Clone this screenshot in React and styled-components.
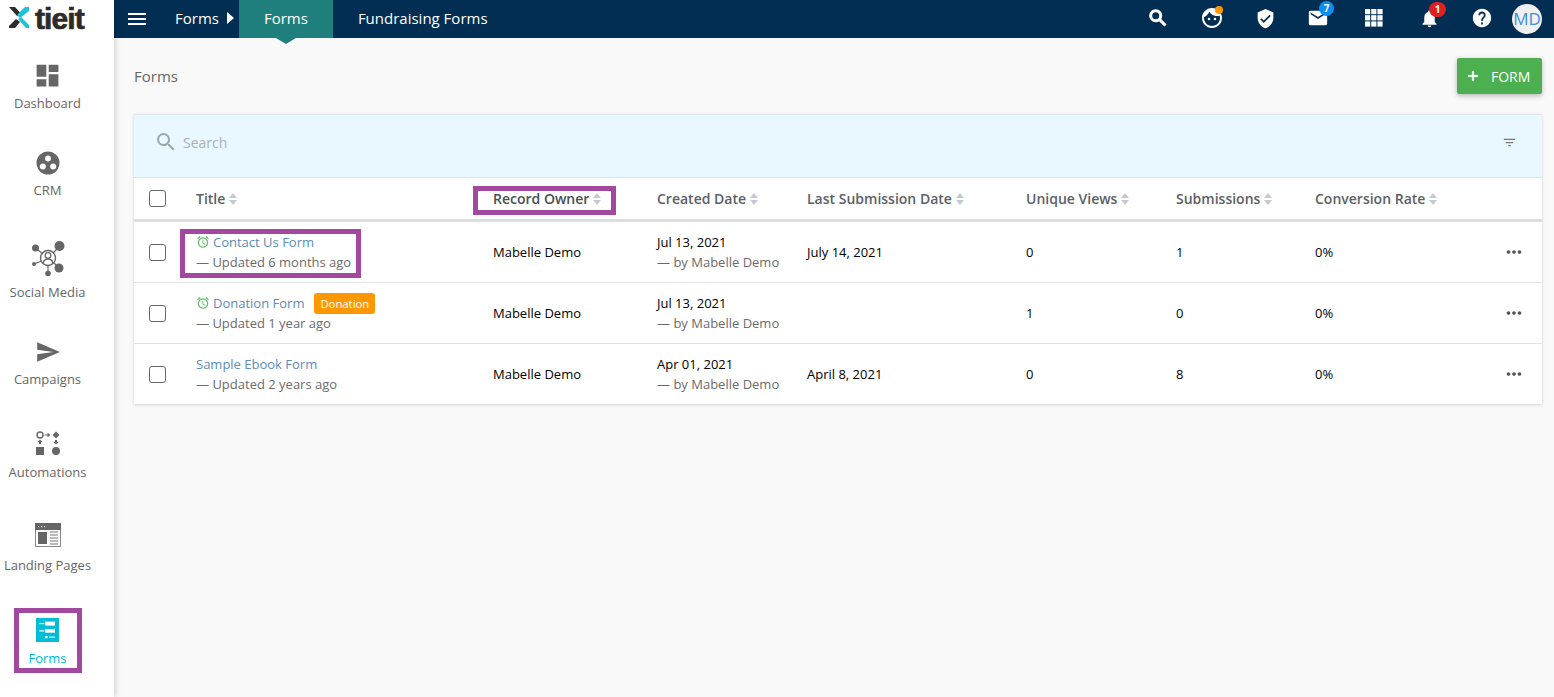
import React from "react";
import styled, { createGlobalStyle } from "styled-components";
import {
  MdDashboard,
  MdSend,
  MdMenu,
  MdSearch,
  MdFace,
  MdVerifiedUser,
  MdMail,
  MdNotifications,
  MdHelp,
  MdFilterList,
  MdMoreHoriz,
  MdAccessAlarm,
  MdAdd,
} from "react-icons/md";

const PURPLE = "#a2489e";
const GRID = "62px 297px 164px 150px 219px 150px 139px 1fr 36px";

const GlobalStyle = createGlobalStyle`
  html, body { margin: 0; height: 100%; }
  body {
    font-family: "Open Sans", "Liberation Sans", sans-serif;
    font-size: 13px;
    background: #f9f9f9;
    color: #000;
    overflow: hidden;
  }
`;

const Shell = styled.div`
  display: flex;
  height: 697px;
`;

const Sidebar = styled.aside`
  width: 114px;
  flex: none;
  background: #fff;
  box-shadow: 2px 0 5px rgba(0, 0, 0, 0.14);
  position: relative;
  z-index: 2;
`;

const LogoBox = styled.div`
  height: 38px;
  display: flex;
  align-items: flex-start;
  padding: 7px 0 0 9px;
  box-sizing: border-box;
`;

const LogoWord = styled.span`
  font-family: "Liberation Sans", sans-serif;
  font-weight: 700;
  font-size: 30px;
  line-height: 23px;
  letter-spacing: -0.9px;
  color: #2d2a2b;
  -webkit-text-stroke: 0.7px #2d2a2b;
  margin-left: 6px;
`;

const NavList = styled.nav`
  width: 95px;
  display: flex;
  flex-direction: column;
  align-items: center;
`;

const NavItem = styled.div`
  position: relative;
  height: ${(p) => p.$h}px;
  width: 100%;
  display: flex;
  flex-direction: column;
  align-items: center;
  color: ${(p) => (p.$active ? "#00bcd4" : "#666")};
  font-size: 13px;
`;

const NavIcon = styled.div`
  height: ${(p) => p.$h}px;
  display: flex;
  align-items: flex-end;
  justify-content: center;
  color: ${(p) => (p.$active ? "#00bcd4" : "#666")};

  svg {
    display: block;
  }
`;

const NavLabel = styled.div`
  line-height: 18px;
  margin-top: ${(p) => p.$gap}px;
  white-space: nowrap;
`;

const Frame = styled.div`
  position: absolute;
  border: 5px solid ${PURPLE};
  box-sizing: border-box;
  pointer-events: none;
`;

const SideFrame = styled(Frame)`
  left: 14px;
  top: 2px;
  width: 68px;
  height: 65px;
`;

const Main = styled.div`
  flex: 1;
  min-width: 0;
  display: flex;
  flex-direction: column;
`;

const TopBar = styled.header`
  height: 38px;
  flex: none;
  background: #012e52;
  display: flex;
  align-items: center;
  color: #fff;
  font-size: 15px;
  position: relative;
`;

const MenuButton = styled.div`
  width: 46px;
  display: flex;
  justify-content: center;
  font-size: 24px;
`;

const Crumb = styled.div`
  margin-left: 15px;
  display: flex;
  align-items: center;
  height: 100%;
  box-sizing: border-box;
  padding-bottom: 2px;
`;

const CrumbArrow = styled.span`
  width: 0;
  height: 0;
  margin-left: 8px;
  border-left: 7px solid #fff;
  border-top: 6px solid transparent;
  border-bottom: 6px solid transparent;
`;

const Tab = styled.div`
  height: 100%;
  box-sizing: border-box;
  display: flex;
  align-items: center;
  padding: 0 25px 2px;
  position: relative;
  background: ${(p) => (p.$active ? "#1f7f7c" : "transparent")};
  margin-left: ${(p) => (p.$active ? "5px" : "0")};

  ${(p) =>
    p.$active &&
    `&::after {
      content: "";
      position: absolute;
      left: 50%;
      bottom: -6px;
      margin-left: -10px;
      border-left: 10px solid transparent;
      border-right: 10px solid transparent;
      border-top: 6px solid #1f7f7c;
    }`}
`;

const TopIcons = styled.div`
  margin-left: auto;
  display: flex;
  align-items: center;
  height: 100%;
`;

const TopIcon = styled.div`
  position: relative;
  width: ${(p) => p.$w}px;
  height: 100%;
  box-sizing: border-box;
  padding-bottom: 2px;
  display: flex;
  align-items: center;
  justify-content: center;
  font-size: ${(p) => p.$size || 24}px;
`;

const BoldSearch = styled(MdSearch)`
  path:not([fill="none"]) {
    stroke: currentColor;
    stroke-width: 1.3;
  }
`;

const Badge = styled.span`
  position: absolute;
  left: ${(p) => p.$x}px;
  top: ${(p) => p.$y}px;
  width: ${(p) => p.$w}px;
  height: 15px;
  border-radius: 8px;
  background: ${(p) => p.$bg};
  color: #fff;
  font-size: 10px;
  font-weight: 700;
  line-height: 15px;
  text-align: center;
`;

const Dot = styled.span`
  position: absolute;
  left: 30px;
  top: 6px;
  width: 8px;
  height: 8px;
  border-radius: 50%;
  background: #ff9800;
`;

const Avatar = styled.div`
  width: 30px;
  height: 30px;
  border-radius: 50%;
  background: #f0f0f0;
  color: #3f8fdc;
  font-size: 17px;
  line-height: 30px;
  text-align: center;
  margin: 0 12px 0 4px;
`;

const Content = styled.main`
  flex: 1;
  padding: 20px 12px 0 20px;
`;

const PageHead = styled.div`
  height: 36px;
  display: flex;
  align-items: center;
  justify-content: space-between;
`;

const PageTitle = styled.h1`
  margin: 0;
  font-size: 15px;
  font-weight: 400;
  color: #666;
`;

const AddButton = styled.button`
  width: 85px;
  height: 36px;
  border: 0;
  border-radius: 2px;
  background: #4caf50;
  color: #fff;
  font: 400 14px "Open Sans", sans-serif;
  display: flex;
  align-items: center;
  gap: 10px;
  padding: 0 0 0 8px;
  box-shadow: 0 2px 5px rgba(0, 0, 0, 0.26);

  svg {
    font-size: 16px;
  }

  svg path:not([fill="none"]) {
    stroke: currentColor;
    stroke-width: 1;
  }
`;

const Panel = styled.section`
  margin-top: 20px;
  background: #fff;
  box-shadow: 0 1px 3px rgba(0, 0, 0, 0.16);
`;

const SearchBand = styled.div`
  height: 64px;
  box-sizing: border-box;
  background: #e9f7ff;
  border-top: 1px solid #dde5ea;
  border-bottom: 1px solid #dde5ea;
  display: flex;
  align-items: center;
  padding: 0 25px 8px 20px;
  color: #aaa;
  font-size: 14px;
`;

const SearchLabel = styled.span`
  margin-left: 5px;
  color: #a9b1b6;
`;

const FilterButton = styled.div`
  margin-left: auto;
  font-size: 15px;
  color: #777;
  display: flex;
`;

const HeadRow = styled.div`
  display: grid;
  grid-template-columns: ${GRID};
  height: 44px;
  box-sizing: border-box;
  align-items: center;
  border-bottom: 3px solid #dedede;
  font-size: 14px;
  font-weight: 600;
  color: #5b5f66;
`;

const Row = styled.div`
  display: grid;
  grid-template-columns: ${GRID};
  height: 60px;
  align-items: center;
  border-bottom: 1px solid #e3e3e3;

  &:last-child {
    border-bottom: 0;
  }
`;

const Check = styled.span`
  display: block;
  width: 15px;
  height: 15px;
  margin-left: 15px;
  border: 1px solid #666;
  border-radius: 3px;
`;

const HeadCell = styled.div`
  position: relative;
  display: flex;
  align-items: center;
  gap: 4px;
  white-space: nowrap;
  color: ${(p) => p.$color || "inherit"};
`;

const OwnerFrame = styled(Frame)`
  left: -20px;
  top: -3px;
  width: 143px;
  height: 29px;
`;

const TitleCell = styled.div`
  position: relative;
`;

const TitleFrame = styled(Frame)`
  left: -16px;
  top: -3px;
  width: 181px;
  height: 49px;
`;

const TitleLine = styled.div`
  display: flex;
  align-items: center;
  height: 20px;
  line-height: 20px;
  color: #5b8db8;
`;

const Alarm = styled(MdAccessAlarm)`
  color: #66bb6a;
  font-size: 14px;
  margin-right: 3px;
`;

const Tag = styled.span`
  margin-left: 10px;
  background: #ff9800;
  color: #fff;
  font-size: 11.3px;
  line-height: 21px;
  padding: 0 6px;
  border-radius: 3px;
`;

const SubLine = styled.div`
  line-height: 20px;
  color: #6b6b6b;
`;

const DateLine = styled.div`
  line-height: 20px;
  color: #000;
`;

const More = styled.div`
  display: flex;
  color: #555;
  font-size: 22px;
  margin-left: -3px;
`;

const Plain = styled.div`
  color: #000;
`;

function SortIcon() {
  return (
    <svg width="8" height="12" viewBox="0 0 8 12" fill="#c3cad3">
      <path d="M4 0l4 5H0z" />
      <path d="M4 12L0 7h8z" />
    </svg>
  );
}

function CrmIcon() {
  return (
    <svg width="24" height="24" viewBox="0 0 24 24">
      <circle cx="12" cy="12" r="11.5" fill="#666" />
      <circle cx="12" cy="7.5" r="3" fill="#fff" />
      <circle cx="6.8" cy="15.5" r="3" fill="#fff" />
      <circle cx="17.2" cy="15.5" r="3" fill="#fff" />
    </svg>
  );
}

function SocialIcon() {
  return (
    <svg width="34" height="36" viewBox="0 0 34 36" fill="#666" stroke="#666">
      <g strokeWidth="1.2">
        <line x1="7" y1="9" x2="12" y2="13" />
        <line x1="28" y1="6" x2="22" y2="12" />
        <line x1="3" y1="23" x2="11" y2="20" />
        <line x1="27" y1="26" x2="23" y2="22" />
        <line x1="17" y1="25" x2="17" y2="31" />
      </g>
      <circle cx="4.5" cy="7" r="3.5" stroke="none" />
      <circle cx="28.5" cy="5" r="5" stroke="none" />
      <circle cx="3" cy="23" r="2" stroke="none" />
      <circle cx="28" cy="27" r="4.5" stroke="none" />
      <circle cx="17" cy="32.5" r="2.8" stroke="none" />
      <circle cx="17" cy="17" r="7.5" fill="none" strokeWidth="1.4" />
      <circle cx="17" cy="14.5" r="2.8" fill="none" strokeWidth="1.3" />
      <path d="M12.2 22c.5-3 2.8-4 4.8-4s4.3 1 4.8 4" fill="none" strokeWidth="1.3" />
    </svg>
  );
}

function AutomationIcon() {
  return (
    <svg width="24" height="24" viewBox="0 0 24 24" fill="#666" stroke="none">
      <circle cx="4" cy="4" r="3" fill="none" stroke="#666" strokeWidth="1.4" />
      <path d="M20 .5L23.5 4 20 7.5 16.5 4z" />
      <path d="M8.5 3.4h3V1.8L14.5 4l-3 2.2V4.600h-3z" />
      <path d="M4 8.500L6.600 11H5v2H3v-2H1.400z" />
      <path d="M19 9h2v2h1.600L20 13.500 17.400 11H19z" />
      <rect x="0" y="16" width="8" height="8" />
      <circle cx="20" cy="20" r="4" />
    </svg>
  );
}

function LandingIcon() {
  return (
    <svg width="26" height="24" viewBox="0 0 26 24">
      <rect x="0" y="0" width="26" height="24" fill="#888" />
      <rect x="1" y="7" width="24" height="16" fill="#fff" />
      <rect x="0" y="0" width="26" height="7" fill="#666" />
      <rect x="3" y="3" width="1.2" height="1.2" fill="#fff" />
      <rect x="6" y="3" width="1.2" height="1.2" fill="#fff" />
      <rect x="9" y="3" width="1.2" height="1.2" fill="#fff" />
      <rect x="3" y="9" width="9" height="12" fill="#666" />
      <path d="M15 9h8M15 12h8M15 15h8M15 18h8M15 21h8" stroke="#777" strokeWidth="1.2" />
    </svg>
  );
}

function FormsIcon() {
  return (
    <svg width="23" height="24" viewBox="0 0 23 24">
      <rect width="23" height="24" fill="#00bcd4" />
      <rect x="9" y="3.6" width="10" height="4" fill="#fff" />
      <rect x="9" y="11" width="10" height="3.7" fill="#fff" />
      <rect x="3.3" y="5" width="5" height="1.2" fill="#fff" />
      <rect x="3.3" y="12.3" width="5" height="1.2" fill="#fff" />
      <rect x="9" y="18" width="2.6" height="2.2" fill="#fff" />
      <rect x="13" y="18.6" width="6" height="1" fill="#fff" />
    </svg>
  );
}

function LogoMark() {
  return (
    <svg width="20" height="21" viewBox="0 0 20 21">
      <path d="M0 0h6l8 9H8z" fill="#2d2a2b" />
      <path d="M0 21v-2l7-7 4 3-5 6z" fill="#2d2a2b" />
      <path d="M20 0v4l-9 7-3-3 8-8z" fill="#1cc3d8" />
      <path d="M9 12l3-2 8 8v3h-3z" fill="#1cc3d8" />
    </svg>
  );
}

function AppsIcon() {
  return (
    <svg width="18" height="18" viewBox="0 0 18 18" fill="#fff">
      {[0, 6.2, 12.4].flatMap((y) =>
        [0, 6.2, 12.4].map((x) => (
          <rect key={`${x}-${y}`} x={x} y={y} width="5.2" height="5.2" />
        ))
      )}
    </svg>
  );
}

const navItems = [
  { label: "Dashboard", icon: <MdDashboard size={29} />, h: 87, iconH: 52, gap: 4 },
  { label: "CRM", icon: <CrmIcon />, h: 103, iconH: 50, gap: 6 },
  { label: "Social Media", icon: <SocialIcon />, h: 96, iconH: 49, gap: 6 },
  { label: "Campaigns", icon: <MdSend size={26} />, h: 96, iconH: 41, gap: 5 },
  { label: "Automations", icon: <AutomationIcon />, h: 90, iconH: 35, gap: 8 },
  { label: "Landing Pages", icon: <LandingIcon />, h: 96, iconH: 37, gap: 9 },
  { label: "Forms", icon: <FormsIcon />, h: 70, iconH: 36, gap: 7, active: true },
];

const columns = [
  "Title",
  "Record Owner",
  "Created Date",
  "Last Submission Date",
  "Unique Views",
  "Submissions",
  "Conversion Rate",
];

const rows = [
  {
    title: "Contact Us Form",
    alarm: true,
    updated: "Updated 6 months ago",
    created: "Jul 13, 2021",
    last: "July 14, 2021",
    views: "0",
    subs: "1",
    framed: true,
  },
  {
    title: "Donation Form",
    alarm: true,
    tag: "Donation",
    updated: "Updated 1 year ago",
    created: "Jul 13, 2021",
    last: "",
    views: "1",
    subs: "0",
  },
  {
    title: "Sample Ebook Form",
    updated: "Updated 2 years ago",
    created: "Apr 01, 2021",
    last: "April 8, 2021",
    views: "0",
    subs: "8",
  },
];

export default function App() {
  return (
    <Shell>
      <GlobalStyle />
      <Sidebar>
        <LogoBox>
          <LogoMark />
          <LogoWord>tieit</LogoWord>
        </LogoBox>
        <NavList>
          {navItems.map((item) => (
            <NavItem key={item.label} $h={item.h} $active={item.active}>
              <NavIcon $h={item.iconH} $active={item.active}>
                {item.icon}
              </NavIcon>
              <NavLabel $gap={item.gap}>{item.label}</NavLabel>
              {item.active && <SideFrame />}
            </NavItem>
          ))}
        </NavList>
      </Sidebar>
      <Main>
        <TopBar>
          <MenuButton>
            <MdMenu />
          </MenuButton>
          <Crumb>
            Forms
            <CrumbArrow />
          </Crumb>
          <Tab $active>Forms</Tab>
          <Tab>Fundraising Forms</Tab>
          <TopIcons>
            <TopIcon $w={54} $size={22}>
              <BoldSearch />
            </TopIcon>
            <TopIcon $w={54} $size={24}>
              <MdFace />
              <Dot />
            </TopIcon>
            <TopIcon $w={52} $size={21}>
              <MdVerifiedUser />
            </TopIcon>
            <TopIcon $w={54} $size={22}>
              <MdMail />
              <Badge $x={28} $y={1} $w={15} $bg="#0a8ef0">7</Badge>
            </TopIcon>
            <TopIcon $w={58}>
              <AppsIcon />
            </TopIcon>
            <TopIcon $w={52} $size={21}>
              <MdNotifications />
              <Badge $x={26} $y={2} $w={17} $bg="#e02020">1</Badge>
            </TopIcon>
            <TopIcon $w={53} $size={22}>
              <MdHelp />
            </TopIcon>
            <Avatar>MD</Avatar>
          </TopIcons>
        </TopBar>
        <Content>
          <PageHead>
            <PageTitle>Forms</PageTitle>
            <AddButton>
              <MdAdd />
              FORM
            </AddButton>
          </PageHead>
          <Panel>
            <SearchBand>
              <MdSearch size={24} color="#9aa7b0" />
              <SearchLabel>Search</SearchLabel>
              <FilterButton>
                <MdFilterList />
              </FilterButton>
            </SearchBand>
            <HeadRow>
              <Check />
              {columns.map((name) => (
                <HeadCell key={name} $color={name === "Record Owner" ? "#4a4f55" : undefined}>
                  {name}
                  <SortIcon />
                  {name === "Record Owner" && <OwnerFrame />}
                </HeadCell>
              ))}
            </HeadRow>
            {rows.map((row) => (
              <Row key={row.title}>
                <Check />
                <TitleCell>
                  <TitleLine>
                    {row.alarm && <Alarm />}
                    {row.title}
                    {row.tag && <Tag>{row.tag}</Tag>}
                  </TitleLine>
                  <SubLine>— {row.updated}</SubLine>
                  {row.framed && <TitleFrame />}
                </TitleCell>
                <Plain>Mabelle Demo</Plain>
                <div>
                  <DateLine>{row.created}</DateLine>
                  <SubLine>— by Mabelle Demo</SubLine>
                </div>
                <Plain>{row.last}</Plain>
                <Plain>{row.views}</Plain>
                <Plain>{row.subs}</Plain>
                <Plain>0%</Plain>
                <More>
                  <MdMoreHoriz />
                </More>
              </Row>
            ))}
          </Panel>
        </Content>
      </Main>
    </Shell>
  );
}
